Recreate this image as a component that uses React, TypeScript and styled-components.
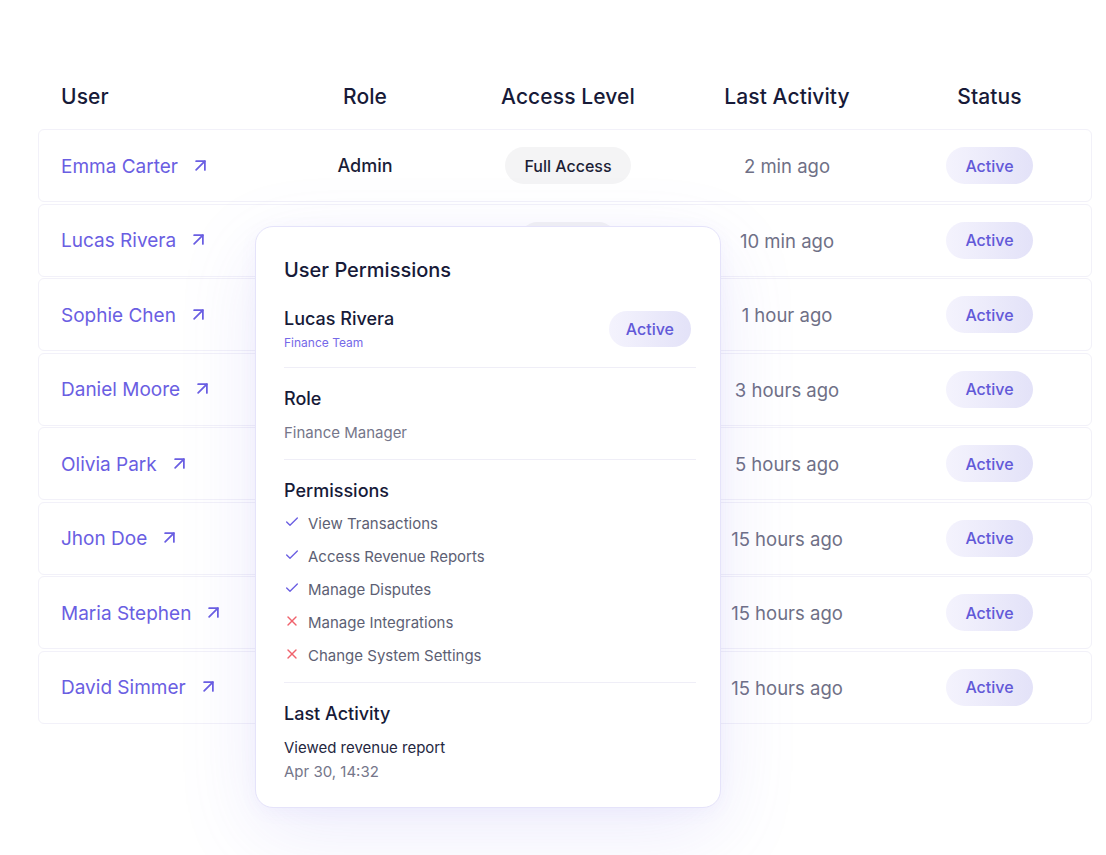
import React from 'react';
import styled, { createGlobalStyle } from 'styled-components';
import { ArrowUpRight, Check, X } from 'lucide-react';

const GlobalStyle = createGlobalStyle`
  html, body {
    margin: 0;
    padding: 0;
    background: #ffffff;
    font-family: Inter, "Noto Sans", sans-serif;
    -webkit-font-smoothing: antialiased;
  }
`;

const Page = styled.div`
  width: 1106px;
  height: 855px;
  padding: 73px 14px 0 38px;
  box-sizing: border-box;
  overflow: hidden;
`;

const Table = styled.div`
  position: relative;
  width: 1054px;
`;

const columns = '220px 168px 238px 200px 205px';

const HeaderRow = styled.div`
  display: grid;
  grid-template-columns: ${columns};
  align-items: center;
  height: 46px;
  padding-left: 23px;
  margin-bottom: 10px;
`;

const HeadCell = styled.div<{ $left?: boolean }>`
  font-size: 21px;
  font-weight: 500;
  color: #171a38;
  text-align: ${p => (p.$left ? 'left' : 'center')};
  letter-spacing: 0.1px;
`;

const Body = styled.div`
  display: flex;
  flex-direction: column;
  gap: 1.5px;
`;

const Row = styled.div`
  display: grid;
  grid-template-columns: ${columns};
  align-items: center;
  height: 73px;
  padding-left: 22px;
  border: 1px solid #f2f1f9;
  border-radius: 6px;
  box-sizing: border-box;
  background: #ffffff;
`;

const NameLink = styled.a`
  display: inline-flex;
  align-items: center;
  gap: 12px;
  font-size: 19px;
  color: #6a5ee2;
  text-decoration: none;
  padding-top: 1px;
  svg {
    margin-top: -2px;
  }
`;

const Cell = styled.div`
  display: flex;
  justify-content: center;
  align-items: center;
`;

const RoleText = styled.span`
  font-size: 18px;
  font-weight: 500;
  color: #1b1d38;
`;

const AccessPill = styled.span`
  display: inline-flex;
  align-items: center;
  height: 37px;
  padding: 0 19px;
  border-radius: 19px;
  background: #f4f4f5;
  font-size: 16px;
  font-weight: 500;
  color: #1c1e36;
`;

const TimeText = styled.span`
  font-size: 18.5px;
  color: #6f7086;
  padding-top: 1px;
`;

const StatusPill = styled.span<{ $small?: boolean }>`
  display: inline-flex;
  align-items: center;
  justify-content: center;
  height: ${p => (p.$small ? '36px' : '37px')};
  padding: 0 ${p => (p.$small ? '17px' : '19px')};
  border-radius: 19px;
  background: linear-gradient(90deg, #f4f3fd 0%, #e3e2f8 100%);
  font-size: 16px;
  font-weight: 500;
  color: #6259d8;
`;

const Popover = styled.div`
  position: absolute;
  left: 217px;
  top: 153px;
  width: 466px;
  height: 582px;
  box-sizing: border-box;
  padding: 30px 24px 0 28px;
  background: #ffffff;
  border: 1px solid #e5e3fa;
  border-radius: 18px;
  box-shadow: 0 24px 80px rgba(118, 106, 228, 0.13), 0 4px 18px rgba(118, 106, 228, 0.05);
`;

const PopTitle = styled.h3`
  margin: 0 0 24px;
  font-size: 20px;
  font-weight: 500;
  color: #171a38;
  line-height: 26px;
`;

const UserHead = styled.div`
  display: flex;
  justify-content: space-between;
  align-items: flex-start;
  padding-bottom: 16px;
  border-bottom: 1px solid #efeef7;
`;

const UserName = styled.div`
  font-size: 18px;
  font-weight: 500;
  color: #171a38;
  line-height: 24px;
`;

const Team = styled.div`
  margin-top: 4px;
  font-size: 12px;
  color: #7569e8;
  line-height: 16px;
`;

const HeadPill = styled.div`
  margin-top: 4px;
  margin-right: 5px;
`;

const Section = styled.div<{ $last?: boolean }>`
  padding: 19px 0 ${p => (p.$last ? '0' : '16px')};
  border-bottom: ${p => (p.$last ? 'none' : '1px solid #efeef7')};
`;

const SectionTitle = styled.div`
  font-size: 18px;
  font-weight: 500;
  color: #171a38;
  line-height: 24px;
`;

const Muted = styled.div<{ $top?: number }>`
  margin-top: ${p => p.$top ?? 0}px;
  font-size: 15px;
  color: #75768a;
  line-height: 20px;
`;

const Dark = styled.div`
  margin-top: 12px;
  font-size: 15px;
  color: #25273f;
  line-height: 20px;
`;

const PermList = styled.ul`
  list-style: none;
  margin: 11px 0 0;
  padding: 0;
  display: flex;
  flex-direction: column;
  gap: 13px;
`;

const PermItem = styled.li`
  display: flex;
  align-items: center;
  gap: 8px;
  font-size: 15px;
  color: #5d5f74;
  line-height: 20px;
  svg {
    flex-shrink: 0;
    margin-top: -4px;
  }
`;

const users = [
  { name: 'Emma Carter', role: 'Admin', access: 'Full Access', time: '2 min ago' },
  { name: 'Lucas Rivera', role: 'Finance Manager', access: 'Finance', time: '10 min ago' },
  { name: 'Sophie Chen', role: 'Support', access: 'Limited', time: '1 hour ago' },
  { name: 'Daniel Moore', role: 'Analyst', access: 'Read Only', time: '3 hours ago' },
  { name: 'Olivia Park', role: 'Developer', access: 'API Access', time: '5 hours ago' },
  { name: 'Jhon Doe', role: 'Support', access: 'Limited', time: '15 hours ago' },
  { name: 'Maria Stephen', role: 'Analyst', access: 'Read Only', time: '15 hours ago' },
  { name: 'David Simmer', role: 'Developer', access: 'API Access', time: '15 hours ago' },
];

const permissions = [
  { label: 'View Transactions', ok: true },
  { label: 'Access Revenue Reports', ok: true },
  { label: 'Manage Disputes', ok: true },
  { label: 'Manage Integrations', ok: false },
  { label: 'Change System Settings', ok: false },
];

export default function App() {
  return (
    <>
      <GlobalStyle />
      <Page>
        <Table>
          <HeaderRow>
            <HeadCell $left>User</HeadCell>
            <HeadCell>Role</HeadCell>
            <HeadCell>Access Level</HeadCell>
            <HeadCell>Last Activity</HeadCell>
            <HeadCell>Status</HeadCell>
          </HeaderRow>
          <Body>
            {users.map(u => (
              <Row key={u.name}>
                <div>
                  <NameLink href="#">
                    {u.name}
                    <ArrowUpRight size={21} strokeWidth={2} />
                  </NameLink>
                </div>
                <Cell>
                  <RoleText>{u.role}</RoleText>
                </Cell>
                <Cell>
                  <AccessPill>{u.access}</AccessPill>
                </Cell>
                <Cell>
                  <TimeText>{u.time}</TimeText>
                </Cell>
                <Cell>
                  <StatusPill>Active</StatusPill>
                </Cell>
              </Row>
            ))}
          </Body>

          {/* hover card for the selected user, floats over the rows */}
          <Popover>
            <PopTitle>User Permissions</PopTitle>
            <UserHead>
              <div>
                <UserName>Lucas Rivera</UserName>
                <Team>Finance Team</Team>
              </div>
              <HeadPill>
                <StatusPill $small>Active</StatusPill>
              </HeadPill>
            </UserHead>
            <Section>
              <SectionTitle>Role</SectionTitle>
              <Muted $top={12}>Finance Manager</Muted>
            </Section>
            <Section>
              <SectionTitle>Permissions</SectionTitle>
              <PermList>
                {permissions.map(p => (
                  <PermItem key={p.label}>
                    {p.ok ? (
                      <Check size={16} color="#6a5ee2" strokeWidth={2} />
                    ) : (
                      <X size={16} color="#f0626c" strokeWidth={2} />
                    )}
                    {p.label}
                  </PermItem>
                ))}
              </PermList>
            </Section>
            <Section $last>
              <SectionTitle>Last Activity</SectionTitle>
              <Dark>Viewed revenue report</Dark>
              <Muted $top={4}>Apr 30, 14:32</Muted>
            </Section>
          </Popover>
        </Table>
      </Page>
    </>
  );
}
